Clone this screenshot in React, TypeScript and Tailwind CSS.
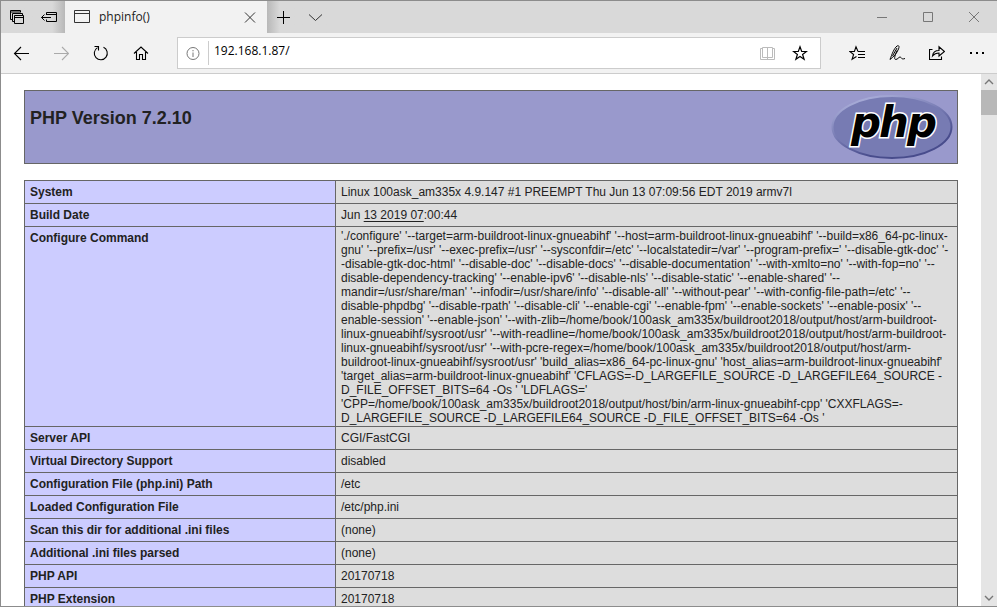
/**
 * Browser window showing the phpinfo() page of a buildroot board.
 *
 * Chrome (title bar + toolbar) on top, page and scrollbar below.
 */

import type { ReactNode } from "react";

interface InfoRow {
  label: string;
  value: ReactNode;
  multiline?: boolean;
}

const CONFIGURE_LINES = [
  "'./configure' '--target=arm-buildroot-linux-gnueabihf' '--host=arm-buildroot-linux-gnueabihf' '--build=x86_64-pc-linux-",
  "gnu' '--prefix=/usr' '--exec-prefix=/usr' '--sysconfdir=/etc' '--localstatedir=/var' '--program-prefix=' '--disable-gtk-doc' '-",
  "-disable-gtk-doc-html' '--disable-doc' '--disable-docs' '--disable-documentation' '--with-xmlto=no' '--with-fop=no' '--",
  "disable-dependency-tracking' '--enable-ipv6' '--disable-nls' '--disable-static' '--enable-shared' '--",
  "mandir=/usr/share/man' '--infodir=/usr/share/info' '--disable-all' '--without-pear' '--with-config-file-path=/etc' '--",
  "disable-phpdbg' '--disable-rpath' '--disable-cli' '--enable-cgi' '--enable-fpm' '--enable-sockets' '--enable-posix' '--",
  "enable-session' '--enable-json' '--with-zlib=/home/book/100ask_am335x/buildroot2018/output/host/arm-buildroot-",
  "linux-gnueabihf/sysroot/usr' '--with-readline=/home/book/100ask_am335x/buildroot2018/output/host/arm-buildroot-",
  "linux-gnueabihf/sysroot/usr' '--with-pcre-regex=/home/book/100ask_am335x/buildroot2018/output/host/arm-",
  "buildroot-linux-gnueabihf/sysroot/usr' 'build_alias=x86_64-pc-linux-gnu' 'host_alias=arm-buildroot-linux-gnueabihf'",
  "'target_alias=arm-buildroot-linux-gnueabihf' 'CFLAGS=-D_LARGEFILE_SOURCE -D_LARGEFILE64_SOURCE -",
  "D_FILE_OFFSET_BITS=64 -Os ' 'LDFLAGS='",
  "'CPP=/home/book/100ask_am335x/buildroot2018/output/host/bin/arm-linux-gnueabihf-cpp' 'CXXFLAGS=-",
  "D_LARGEFILE_SOURCE -D_LARGEFILE64_SOURCE -D_FILE_OFFSET_BITS=64 -Os '",
];

const ROWS: InfoRow[] = [
  { label: "System", value: "Linux 100ask_am335x 4.9.147 #1 PREEMPT Thu Jun 13 07:09:56 EDT 2019 armv7l" },
  {
    label: "Build Date",
    value: (
      <>
        Jun{" "}
        <a href="tel:13201907" className="underline underline-offset-2">
          13 2019 07
        </a>
        :00:44
      </>
    ),
  },
  { label: "Configure Command", value: CONFIGURE_LINES.join("\n"), multiline: true },
  { label: "Server API", value: "CGI/FastCGI" },
  { label: "Virtual Directory Support", value: "disabled" },
  { label: "Configuration File (php.ini) Path", value: "/etc" },
  { label: "Loaded Configuration File", value: "/etc/php.ini" },
  { label: "Scan this dir for additional .ini files", value: "(none)" },
  { label: "Additional .ini files parsed", value: "(none)" },
  { label: "PHP API", value: "20170718" },
  { label: "PHP Extension", value: "20170718" },
];

function Icon({ children }: { children: ReactNode }) {
  return (
    <svg
      viewBox="0 0 16 16"
      className="h-4 w-4 shrink-0"
      fill="none"
      stroke="currentColor"
      strokeWidth="1"
      aria-hidden="true"
    >
      {children}
    </svg>
  );
}

function IconButton({ label, className, children }: { label: string; className: string; children: ReactNode }) {
  return (
    <button
      type="button"
      aria-label={label}
      title={label}
      className={`flex shrink-0 items-center justify-center ${className}`}
    >
      <Icon>{children}</Icon>
    </button>
  );
}

function TitleBar() {
  return (
    <div className="flex h-8 shrink-0 bg-[#d9d9d9] text-black">
      <div className="flex bg-linear-to-r from-[#d9d9d9] from-80% to-[#b8b8b8]">
        <IconButton label="Tabs you've set aside" className="w-8">
          <path d="M3.5 10.5H1.5V1.5H11.5V3.5M1.5 3H11M5.5 12.5H3.5V4.5H13.5V6.5" />
          <path d="M5.5 6.5H14.5V14.5H5.5ZM5.5 8.5H14.5" />
        </IconButton>
        <IconButton label="Set these tabs aside" className="w-8">
          <path d="M5.5 6V3.5H15.5V12.5H5.5V10.5M5.5 5.5H15.5M0.5 8.5H10M3.5 5.5l-3 3 3 3" />
        </IconButton>
      </div>
      <div className="flex w-[202px] items-center bg-[#f2f2f2] pr-2 pl-[9px]">
        <Icon>
          <path d="M0.5 1.5H15.5V13.5H0.5ZM0.5 4.5H15.5" stroke="#333" />
        </Icon>
        <span className="flex-1 pl-[9px] text-xs text-[#222]">phpinfo()</span>
        <IconButton label="Close tab" className="w-[18px] text-[#333]">
          <path d="M3 3.5l10 10M13 3.5l-10 10" />
        </IconButton>
      </div>
      <div className="flex bg-linear-to-l from-[#d9d9d9] from-80% to-[#b8b8b8]">
        <IconButton label="New tab" className="w-8">
          <path d="M2 8.5H15M8.5 2V15" />
        </IconButton>
        <IconButton label="Show tab previews" className="w-8 text-[#333]">
          <path d="M2 5.5l6.5 6 6.5-6" />
        </IconButton>
      </div>
      <div className="flex flex-1 justify-end text-[#777]">
        <IconButton label="Minimize" className="w-[46px]">
          <path d="M3 8.5H13" />
        </IconButton>
        <IconButton label="Maximize" className="w-[46px]">
          <path d="M3.5 3.5H12.5V12.5H3.5Z" />
        </IconButton>
        <IconButton label="Close" className="w-[46px]">
          <path d="M3 3l10 10M13 3l-10 10" />
        </IconButton>
      </div>
    </div>
  );
}

function Toolbar() {
  return (
    <div className="flex h-[41px] shrink-0 items-stretch border-b border-[#ccc] bg-[#f2f2f2] text-black">
      <IconButton label="Back" className="w-10">
        <path d="M1.5 8.5H16M8 2L1.5 8.5 8 15" strokeWidth="1.1" />
      </IconButton>
      <IconButton label="Forward" className="w-10 text-[#aaa]">
        <path d="M1 8.5H15.5M9 2l6.5 6.5L9 15" strokeWidth="1.1" />
      </IconButton>
      <IconButton label="Refresh" className="w-10">
        <path d="M4.5 2.6A6.5 6.5 0 1 0 10.5 2.3M1.5 1.5H5.5V5.5" strokeWidth="1.1" />
      </IconButton>
      <IconButton label="Home" className="w-10">
        <path d="M1 8.5L8 2l7 6.5M3.5 7V14.5H6.5V9.5H9.5V14.5H12.5V7" strokeWidth="1.1" />
      </IconButton>

      <div className="my-1 ml-4 flex flex-1 items-center border border-[#ccc] bg-white">
        <IconButton label="Site information" className="w-[30px] text-[#777]">
          <circle cx="8" cy="8.5" r="6" />
          <path d="M8 7.5V12M8 5V6.3" />
        </IconButton>
        <div className="h-6 w-px bg-[#ccc]" />
        <input
          type="text"
          aria-label="Address"
          defaultValue="192.168.1.87/"
          className="min-w-0 flex-1 bg-transparent pb-1 pl-[5px] text-xs outline-none"
        />
        <IconButton label="Reading view" className="w-8 text-[#bbb]">
          <path d="M2.5 3.5H0.5V14.5H14.5V3.5H12.5M2.5 2.5H12.5V12.5H2.5ZM7.5 3V14" />
        </IconButton>
        <IconButton label="Add to favorites" className="mr-1 w-8">
          <path
            d="M8 1.8l1.7 4.7h4.8l-3.9 3 1.5 4.8L8 11.4l-4.1 2.9 1.5-4.8-3.9-3h4.8Z"
            strokeWidth="1.2"
          />
        </IconButton>
      </div>

      <div className="ml-4 flex">
        <IconButton label="Favorites" className="w-10">
          <path
            d="M9 6.5L7 1.8 5.4 6.5H0.8l3.8 3-1.5 4.8L7.5 11.5M9 6.5H16M9 9.5H16M9 12.5H16"
            strokeWidth="1.1"
          />
        </IconButton>
        <IconButton label="Add notes" className="w-10">
          <path d="M1 14.5C3 9 5 3.5 8 1c2-1 2.5.5 1.5 3C8 8 5 11.5 1 14.5M8 5.5C6.5 9 4.5 14 6.5 14.5c2.5 0 3-2.5 4.5-2.5s1 3 5 1.5M3.5 11L8 3" />
        </IconButton>
        <IconButton label="Share" className="w-10">
          <path
            d="M3.5 4.5H0.5V14.5H12.5V11.5M3.5 11c.5-4 3-5.5 6.5-5.5V1.8L15.5 6.5 10 11V8c-3 0-4.5.5-6.5 3Z"
            strokeWidth="1.1"
          />
        </IconButton>
        <IconButton label="Settings and more" className="w-10">
          <path d="M1 8H3M7 8H9M13 8H15" strokeWidth="1.8" />
        </IconButton>
      </div>
    </div>
  );
}

function PhpLogo() {
  return (
    <svg viewBox="0 0 122 66" className="h-[66px] w-[122px] shrink-0" role="img" aria-label="PHP logo">
      <defs>
        <linearGradient id="logoRim" x1="0.2" y1="0" x2="0.75" y2="1">
          <stop offset="0" stopColor="#aeb2dc" />
          <stop offset="0.45" stopColor="#777bb3" />
          <stop offset="0.8" stopColor="#484c8c" />
        </linearGradient>
      </defs>
      <ellipse cx="61" cy="32" rx="59.5" ry="31" fill="#777bb3" stroke="url(#logoRim)" strokeWidth="2" />
      {/* Separate letters so each white outline overlaps its neighbour */}
      <g
        className="font-['DejaVu_Sans',sans-serif] text-[42px] font-bold italic"
        fill="#000"
        stroke="#fff"
        strokeWidth="3"
        paintOrder="stroke"
      >
        <text x="20" y="42">
          p
        </text>
        <text x="48" y="42">
          h
        </text>
        <text x="76" y="42">
          p
        </text>
      </g>
    </svg>
  );
}

function InfoTable() {
  return (
    <table className="mt-4 w-full table-fixed border-collapse text-xs leading-[14px]">
      <tbody>
        {ROWS.map((row) => (
          <tr key={row.label} className="align-top">
            <th
              scope="row"
              className="w-1/3 border border-[#666] bg-[#ccccff] px-[5px] py-1 text-left font-bold"
            >
              {row.label}
            </th>
            <td
              className={`border border-[#666] bg-[#dddddd] px-[5px] ${
                row.multiline ? "pt-0.5 pb-px whitespace-pre-line" : "py-1"
              }`}
            >
              {row.value}
            </td>
          </tr>
        ))}
      </tbody>
    </table>
  );
}

function Scrollbar() {
  return (
    <div className="flex w-4 shrink-0 flex-col bg-[#e5e5e5] text-[#777]">
      <IconButton label="Scroll up" className="h-4 w-4">
        <path d="M4 10l4-4 4 4" strokeWidth="1.4" />
      </IconButton>
      <div className="h-[25px] bg-[#b8b8b8]" />
      <div className="flex-1" />
      <IconButton label="Scroll down" className="h-4 w-4">
        <path d="M4 6l4 4 4-4" strokeWidth="1.4" />
      </IconButton>
    </div>
  );
}

export default function App() {
  return (
    <div className="flex h-screen flex-col overflow-hidden border-t border-b border-l border-[#8c8c8c] bg-white font-['Open_Sans','Noto_Sans',sans-serif]">
      <TitleBar />
      <Toolbar />
      <div className="flex min-h-0 flex-1">
        <main className="min-w-0 flex-1 overflow-hidden px-4 pt-4 font-['Liberation_Sans',Arial,sans-serif] text-[#222]">
          <div className="mx-auto max-w-[934px]">
            <header className="flex h-[74px] justify-between border border-[#666] bg-[#9999cc] pt-1 pr-1 pl-[5px]">
              <h1 className="pt-3 text-lg leading-[22px] font-bold">PHP Version 7.2.10</h1>
              <PhpLogo />
            </header>
            <InfoTable />
          </div>
        </main>
        <Scrollbar />
      </div>
    </div>
  );
}
